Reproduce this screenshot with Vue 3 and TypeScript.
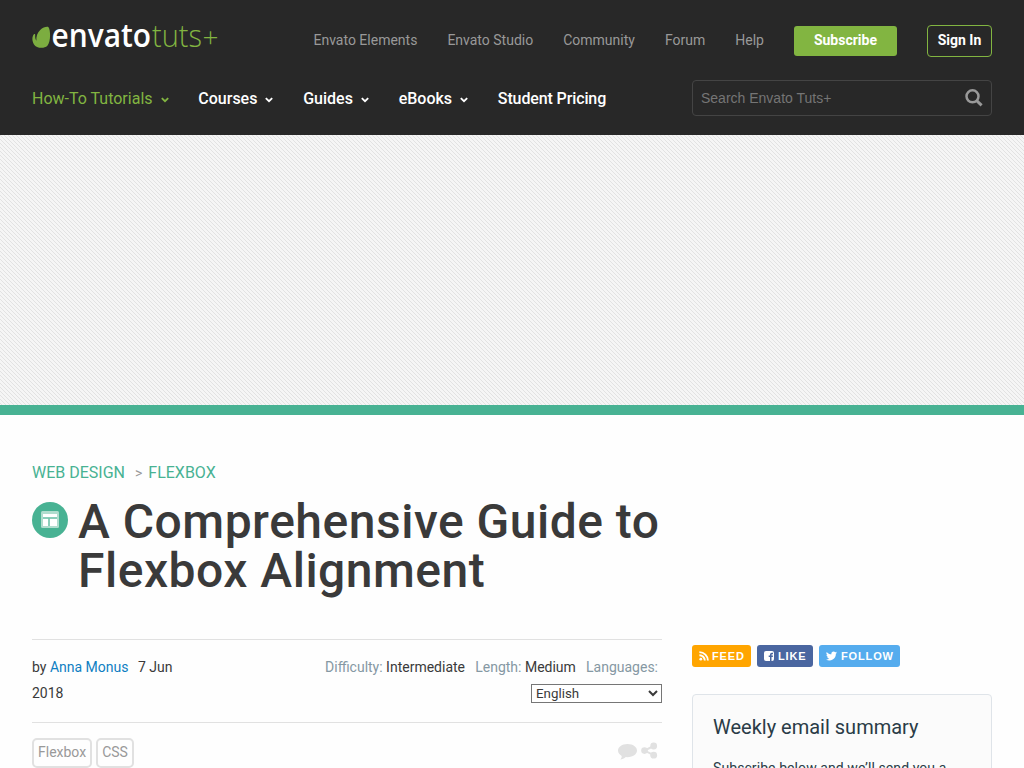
<script setup lang="ts">
const topLinks: string[] = ['Envato Elements', 'Envato Studio', 'Community', 'Forum', 'Help']
const navLinks: { label: string; menu: boolean; active?: boolean }[] = [
  { label: 'How-To Tutorials', menu: true, active: true },
  { label: 'Courses', menu: true },
  { label: 'Guides', menu: true },
  { label: 'eBooks', menu: true },
  { label: 'Student Pricing', menu: false },
]
const tags: string[] = ['Flexbox', 'CSS']
</script>

<template>
  <div class="page">
    <header class="header">
      <div class="top-row">
        <svg class="logo" width="190" height="36" viewBox="0 0 190 36">
          <path d="M16.5 8.2C18.5 10.5 19.2 22 15.4 26.7C12 30 4.3 29.200 2 25.4C-.2 21.5 .1 17.5 1.7 15.4C2.5 14.5 3.3 14.9 3.2 16C3 18.5 3.4 20.3 4.4 21.7C4 17.7 5.4 13.4 8.2 10.9C11 8.2 15.4 7.1 16.5 8.2Z" fill="#7cad40" />
          <text x="19.500" y="28" class="logo-main" textLength="99.500" lengthAdjust="spacingAndGlyphs">envato</text>
          <text x="120" y="28" class="logo-sub" textLength="50" lengthAdjust="spacingAndGlyphs">tuts</text>
          <text x="170.500" y="28" class="logo-plus" textLength="16" lengthAdjust="spacingAndGlyphs">+</text>
        </svg>
        <nav class="top-links">
          <a v-for="link in topLinks" :key="link">{{ link }}</a>
          <a class="subscribe">Subscribe</a>
          <a class="sign-in">Sign In</a>
        </nav>
      </div>
      <div class="nav-row">
        <nav class="main-nav">
          <a v-for="item in navLinks" :key="item.label" :class="{ active: item.active }">
            {{ item.label }}
            <svg v-if="item.menu" width="8" height="6" viewBox="0 0 8 6"><path d="M.8 1.1L4 4.2L7.2 1.1" fill="none" stroke="currentColor" stroke-width="1.8" /></svg>
          </a>
        </nav>
        <div class="search">
          <span>Search Envato Tuts+</span>
          <svg width="18" height="18" viewBox="0 0 18 18" fill="none" stroke="#999"><circle cx="7.5" cy="7.3" r="6" stroke-width="2.5" /><path d="M11.8 11.7L16.6 16.4" stroke-width="3" /></svg>
        </div>
      </div>
    </header>
    <div class="banner"></div>
    <main class="content">
      <article>
        <div class="crumbs"><a>WEB DESIGN</a><span>&gt;</span><a>FLEXBOX</a></div>
        <div class="heading">
          <svg width="36" height="36" viewBox="0 0 36 36"><circle cx="18" cy="18" r="18" fill="#48b293" /><rect x="9" y="9" width="18" height="17" rx="1.500" fill="#b0ddce" /><path d="M11 12H25V15H11ZM11 17H16V24H11ZM18 17H25V24H18Z" fill="#fff" /><path d="M11 16H25M17 16V24" stroke="#67bfa6" fill="none" /></svg>
          <h1>A Comprehensive Guide to Flexbox Alignment</h1>
        </div>
        <div class="meta">
          <div class="byline">by <a>Anna Monus</a> <span class="date">7 Jun 2018</span></div>
          <div class="details">
            <div><span>Difficulty:</span> Intermediate <span class="next">Length:</span> Medium <span class="next">Languages:</span></div>
            <select><option>English</option></select>
          </div>
        </div>
        <div class="tag-row">
          <div class="tags"><a v-for="tag in tags" :key="tag">{{ tag }}</a></div>
          <svg width="40" height="18" viewBox="0 0 40 18" fill="#e1e1e1">
            <path d="M9.500 2C15 2 19 4.900 19 8.600S15 15.200 9.500 15.200L7.800 15.100C6.200 16.800 4.200 17.500 2.300 17.500C3.200 16.500 3.800 15.400 3.700 13.900C1.400 12.700 0 10.900 0 8.600C0 4.900 4 2 9.500 2Z" />
            <circle cx="26.500" cy="8.600" r="3.300" /><circle cx="35.700" cy="4" r="3.400" /><circle cx="35.700" cy="13.200" r="3.400" /><path d="M35.700 4L26.500 8.600L35.700 13.200" fill="none" stroke="#e1e1e1" stroke-width="2" />
          </svg>
        </div>
      </article>
      <aside>
        <div class="social">
          <a class="feed"><svg width="10" height="10" viewBox="0 0 10 10"><circle cx="1.800" cy="8.200" r="1.400" fill="#fff" /><path d="M.4 4.200A5.400 5.400 0 0 1 5.800 9.600M.4 1.100A8.500 8.500 0 0 1 8.900 9.600" fill="none" stroke="#fff" stroke-width="1.900" /></svg>FEED</a>
          <a class="like"><svg width="10" height="10" viewBox="0 0 10 10"><rect width="10" height="10" rx="2" fill="#fff" /><path d="M6 10V6H4.700V4.600H6V3.600Q6 1.800 7.800 1.800H9V3.200H8Q7.500 3.200 7.500 3.800V4.600H9L8.800 6H7.500V10Z" fill="#4a66a0" /></svg>LIKE</a>
          <a class="follow"><svg width="11" height="10" viewBox="0 0 24 20"><path d="M24 2.400c-.9.400-1.800.7-2.800.8 1-.6 1.800-1.600 2.200-2.700-1 .6-2 1-3.100 1.200a4.900 4.900 0 0 0-8.400 4.500C7.700 6 4.100 4 1.700 1a4.900 4.900 0 0 0 1.500 6.600c-.8 0-1.600-.2-2.200-.6 0 2.400 1.700 4.500 3.900 5-.7.200-1.500.2-2.200.1a4.900 4.900 0 0 0 4.600 3.400A9.900 9.900 0 0 1 0 17.500 14 14 0 0 0 21.500 5c1-.7 1.800-1.600 2.500-2.600Z" fill="#fff" /></svg>FOLLOW</a>
        </div>
        <section class="newsletter">
          <h2>Weekly email summary</h2>
          <p>Subscribe below and we’ll send you a weekly email summary of all new tutorials.</p>
        </section>
      </aside>
    </main>
  </div>
</template>

<style>
body { margin: 0; overflow: hidden; }
</style>

<style scoped>
.page { width: 1024px; height: 768px; overflow: hidden; background: #fefefe; color: #3a3a3a; font-family: Roboto, sans-serif; font-size: 14px; }
.page * { box-sizing: border-box; }
.header { height: 135px; padding: 19px 32px 0; background: #282828; }
.top-row { display: flex; justify-content: space-between; height: 42px; }
.logo { display: block; overflow: visible; }
.logo-main { font: 600 32px "Open Sans", sans-serif; fill: #fff; }
.logo-sub { font: 300 32px "Open Sans", sans-serif; fill: #82b541; }
.logo-plus { font: 300 27px "Open Sans", sans-serif; fill: #82b541; }
.top-links { display: flex; align-items: center; gap: 30px; color: #999; }
.subscribe { height: 30px; margin-top: 1px; padding: 0 20px; line-height: 29px; border-radius: 3px; background: #82b541; color: #fff; font-weight: 700; }
.sign-in { width: 65px; height: 32px; margin-top: 1px; line-height: 29px; text-align: center; border: 1px solid #82b541; border-radius: 4px; color: #fff; font-weight: 700; }
.nav-row { display: flex; justify-content: space-between; margin-top: 19px; height: 36px; }
.main-nav { display: flex; gap: 29.8px; line-height: 37px; font-size: 16px; color: #fff; font-weight: 500; white-space: nowrap; }
.main-nav a:last-child { letter-spacing: -.12px; }
.main-nav a.active { color: #82b541; font-weight: 400; }
.main-nav svg { margin: 0 0 1px 4px; }
.search { display: flex; align-items: center; justify-content: space-between; width: 300px; height: 36px; padding: 0 8px; border: 1px solid #444; border-radius: 4px; color: #757575; font-family: "Liberation Sans", sans-serif; }
.search svg { margin-top: -1px; }
.banner { height: 280px; border-bottom: 10px solid #48b293; background: #f5f5f5 url("data:image/svg+xml,%3Csvg xmlns='http://www.w3.org/2000/svg' width='4' height='4' shape-rendering='crispEdges'%3E%3Cpath d='M0 0h1v1H0zM1 1h1v1H1zM2 2h1v1H2zM3 3h1v1H3z' fill='%23e2e2e2'/%3E%3C/svg%3E"); background-size: 4px 4px; }
.content { display: flex; gap: 30px; padding: 46px 32px 0; }
article { width: 630px; }
aside { width: 300px; padding-top: 184px; }
.crumbs { height: 23px; line-height: 23px; font-size: 16px; color: #48b293; }
.crumbs span { margin: 0 6px 0 10px; font-size: 14px; color: #999; }
.heading { display: flex; gap: 10px; margin-top: 13px; }
.heading svg { margin-top: 5px; flex: none; }
h1 { margin: 0; font-size: 48px; line-height: 49px; font-weight: 500; letter-spacing: .5px; }
.meta { display: flex; justify-content: space-between; height: 84px; margin-top: 44px; padding-top: 14px; border: solid #e1e1e1; border-width: 1px 0; line-height: 26px; }
.byline { width: 150px; }
.byline a { color: #0f7ec2; }
.date { margin-left: 6px; }
.details { display: flex; flex-direction: column; align-items: flex-end; }
.details div { padding-right: 4px; }
.details span { color: #8598a3; }
.details .next { margin-left: 6.700px; }
.details select { width: 131px; height: 19px; margin-top: 4px; padding: 0; font: 13.333px Roboto, sans-serif; color: #3a3a3a; background: #fff; }
.tag-row { display: flex; justify-content: space-between; padding: 15px 4px 0 0; }
.tag-row svg { margin-top: 4px; }
.tags { display: flex; gap: 4px; color: #999; }
.tags a { height: 30px; padding: 0 4px; line-height: 25px; border: 2px solid #e1e1e1; border-radius: 5px; }
.social { display: flex; gap: 6px; }
.social a { display: flex; align-items: center; gap: 4px; height: 22px; padding: 0 6px 0 7px; border-radius: 3px; color: #fff; font: 700 11px "Liberation Sans", sans-serif; letter-spacing: .87px; }
.social .feed { width: 59px; gap: 3px; background: #ffa500; }
.social .like { width: 56px; background: #4a66a0; }
.social .follow { width: 81px; background: #55acee; }
.newsletter { height: 200px; margin-top: 27px; padding: 20px; border: 1px solid #dfe4e9; border-radius: 4px; background: #fbfbfb; color: #2a3b47; }
h2 { margin: 0; font-size: 20px; line-height: 25px; font-weight: 400; }
p { margin: 15px 0 0; line-height: 26px; letter-spacing: .08px; }
</style>
